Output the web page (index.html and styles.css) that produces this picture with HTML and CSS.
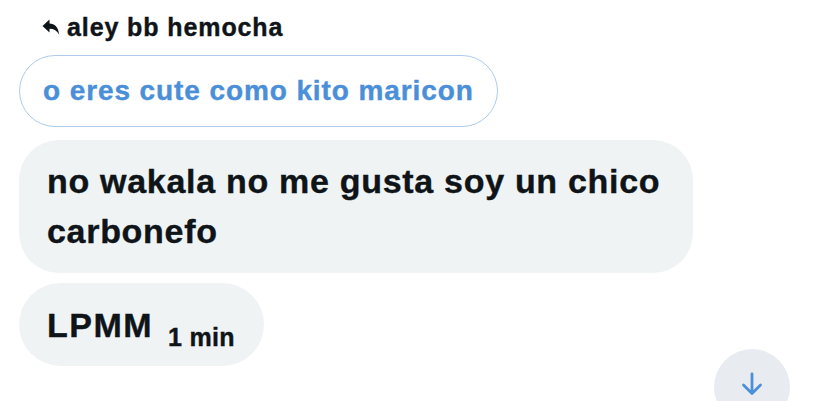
FILE: index.html
```html
<!DOCTYPE html>
<html lang="es">
<head>
    <meta charset="UTF-8">
    <title>Mensajes</title>
    <link rel="stylesheet" href="styles.css">
</head>
<body>
    <div class="chat">
        <!-- mensaje citado -->
        <div class="reply-head">
            <svg class="reply-icon" viewBox="0 0 18 18" width="18" height="18">
                <path d="M0.5 8 L7.5 1.5 V5.5 C12.5 5.5 16.5 9 17 16.5 C15 12.8 12 10.8 7.5 10.8 V14.5 Z" fill="#0f1419"/>
            </svg>
            <span>aley bb hemocha</span>
        </div>
        <div class="quote">o eres cute como kito maricon</div>

        <div class="bubble">no wakala no me gusta soy un chico carbonefo</div>

        <div class="bubble short">
            <span>LPMM</span>
            <span class="time">1 min</span>
        </div>
    </div>

    <!-- boton para bajar -->
    <div class="scroll-btn">
        <svg viewBox="0 0 24 24" width="24" height="24">
            <path d="M12 2 V21.5 M3.5 13 L12 21.5 L20.5 13" fill="none" stroke="#4a8fd8" stroke-width="2.8" stroke-linecap="round" stroke-linejoin="round"/>
        </svg>
    </div>
</body>
</html>
```

FILE: styles.css
```css
*{
    margin: 0;
    padding: 0;
    box-sizing: border-box;
}

body{
    width: 828px;
    height: 401px;
    background-color: #ffffff;
    font-family: "Liberation Sans", Arial, sans-serif;
    font-weight: bold;
    color: #0f1419;
    -webkit-text-stroke: 0.4px currentColor;
    overflow: hidden;
    position: relative;
}

.chat{
    padding: 12px 0 0 19px;
    display: flex;
    flex-direction: column;
    align-items: flex-start;
}

/* cabecera de la respuesta */
.reply-head{
    display: flex;
    align-items: center;
    gap: 7px;
    margin-left: 23px;
    height: 30px;
    font-size: 25px;
    line-height: 30px;
    letter-spacing: 0.9px;
}

.reply-icon{
    margin-top: -1px;
}

.quote{
    margin-top: 13px;
    height: 72px;
    padding: 0 23px;
    border: 1px solid #aecbea;
    border-radius: 36px;
    color: #4a8fd8;
    font-size: 28px;
    letter-spacing: 0.9px;
    display: flex;
    align-items: center;
}

.bubble{
    margin-top: 13px;
    width: 674px;
    height: 133px;
    padding: 16px 20px 0 28px;
    background-color: #eff3f4;
    border-radius: 40px;
    font-size: 34px;
    line-height: 50px;
    letter-spacing: 0.7px;
}

.bubble.short{
    margin-top: 10px;
    width: auto;
    height: 83px;
    padding: 22px 29px 0 28px;
    border-radius: 42px;
    display: flex;
    align-items: baseline;
    gap: 15px;
    line-height: 40px;
    letter-spacing: 1.5px;
}

.time{
    font-size: 25px;
    letter-spacing: 0.3px;
    position: relative;
    top: 9px;
}

.scroll-btn{
    position: absolute;
    left: 714px;
    top: 349px;
    width: 76px;
    height: 76px;
    border-radius: 50%;
    background-color: #e8ecf0;
    display: flex;
    justify-content: center;
    padding-top: 23px;
}
```
